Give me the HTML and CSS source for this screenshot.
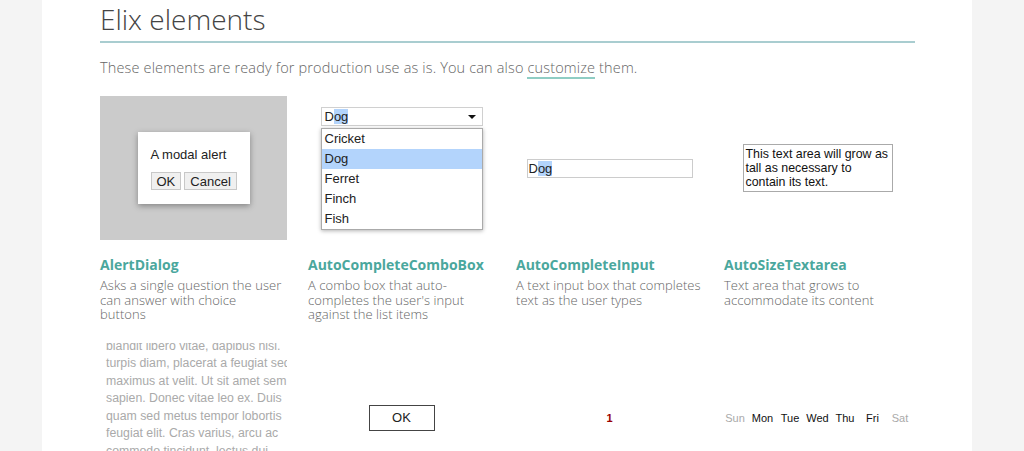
FILE: index.html
```html
<!DOCTYPE html>
<html>
<head>
<meta charset="utf-8">
<link rel="stylesheet" href="styles.css">
</head>
<body>
<div class="page">
  <h1 class="title">Elix elements</h1>
  <p class="intro">These elements are ready for production use as is. You can also <a href="#" class="link">customize</a> them.</p>
  <div class="grid">
    <div class="card">
      <div class="demo demo-alert">
        <div class="dialog">
          <div class="dialog-text">A modal alert</div>
          <div class="dialog-buttons"><span class="btn">OK</span><span class="btn">Cancel</span></div>
        </div>
      </div>
      <div class="card-title">AlertDialog</div>
      <div class="card-desc">Asks a single question the user can answer with choice<br>buttons</div>
    </div>
    <div class="card">
      <div class="demo demo-top">
        <div class="combo">
          <div class="combo-input"><span>D<span class="sel">og</span></span><span class="arrow"></span></div>
          <div class="combo-list">
            <div class="item">Cricket</div>
            <div class="item item-active">Dog</div>
            <div class="item">Ferret</div>
            <div class="item">Finch</div>
            <div class="item">Fish</div>
          </div>
        </div>
      </div>
      <div class="card-title">AutoCompleteComboBox</div>
      <div class="card-desc">A combo box that auto-completes the user's input against the list items</div>
    </div>
    <div class="card">
      <div class="demo">
        <div class="text-input">D<span class="sel">og</span></div>
      </div>
      <div class="card-title">AutoCompleteInput</div>
      <div class="card-desc">A text input box that completes text as the user types</div>
    </div>
    <div class="card">
      <div class="demo">
        <div class="textarea">This text area will grow as tall as necessary to contain its text.</div>
      </div>
      <div class="card-title">AutoSizeTextarea</div>
      <div class="card-desc">Text area that grows to accommodate its content</div>
    </div>

    <div class="card">
      <div class="demo2 demo-lorem">
        <div class="lorem">
          <div>blandit libero vitae, dapibus nisi.</div>
          <div>turpis diam, placerat a feugiat sed</div>
          <div>maximus at velit. Ut sit amet sem</div>
          <div>sapien. Donec vitae leo ex. Duis</div>
          <div>quam sed metus tempor lobortis</div>
          <div>feugiat elit. Cras varius, arcu ac</div>
          <div>commodo tincidunt, lectus dui</div>
        </div>
      </div>
    </div>
    <div class="card">
      <div class="demo2"><span class="ok-btn">OK</span></div>
    </div>
    <div class="card">
      <div class="demo2"><span class="badge">1</span></div>
    </div>
    <div class="card">
      <div class="demo2">
        <div class="days">
          <span class="day weekend">Sun</span>
          <span class="day">Mon</span>
          <span class="day">Tue</span>
          <span class="day">Wed</span>
          <span class="day">Thu</span>
          <span class="day">Fri</span>
          <span class="day weekend">Sat</span>
        </div>
      </div>
    </div>
  </div>
</div>
</body>
</html>
```
FILE: styles.css
```css
html, body {
  margin: 0;
  padding: 0;
}
body {
  background: #f4f4f4;
  height: 451px;
  overflow: hidden;
  font-family: "Open Sans", "Liberation Sans", sans-serif;
}
.page {
  width: 815px;
  margin-left: 42px;
  padding: 0 57px 0 58px;
  background: #fff;
  height: 451px;
  overflow: hidden;
}
.title {
  margin: 0;
  padding: 0 0 3px;
  font-size: 28px;
  font-weight: 300;
  line-height: 38px;
  color: #444;
  border-bottom: 2px solid #a9cdd0;
}
.intro {
  margin: 15px 0 0;
  font-size: 14.5px;
  font-weight: 300;
  line-height: 20px;
  letter-spacing: 0.15px;
  color: #666;
}
.link {
  color: #666;
  text-decoration: none;
  border-bottom: 2px solid #8fcdc4;
}
.grid {
  margin-top: 18px;
  display: grid;
  grid-template-columns: repeat(4, 187px);
  column-gap: 21px;
  row-gap: 21px;
}
.demo {
  height: 144px;
  display: flex;
  align-items: center;
  justify-content: center;
}
.demo-top {
  align-items: flex-start;
  padding-top: 11px;
  height: 133px;
}
.demo-alert {
  background: #cbcbcb;
}
.dialog {
  width: 112px;
  height: 72px;
  box-sizing: border-box;
  background: #fff;
  box-shadow: 0 2px 6px rgba(0,0,0,0.35);
  padding: 15px 0 0 13px;
  font-family: "Liberation Sans", Arial, sans-serif;
  font-size: 13px;
  color: #222;
}
.dialog-buttons {
  margin-top: 10px;
  display: flex;
  gap: 3px;
}
.btn {
  height: 18px;
  line-height: 17px;
  padding: 0 5px;
  box-sizing: border-box;
  background: #f0f0f0;
  border: 1px solid #c8c8c8;
  font-size: 13px;
}
.card-title {
  margin-top: 16px;
  font-size: 14px;
  font-weight: 700;
  color: #4aa79d;
  line-height: 17px;
}
.card-desc {
  margin-top: 5px;
  font-size: 13px;
  font-weight: 300;
  line-height: 14.5px;
  letter-spacing: 0.05px;
  color: #666;
}
.combo {
  width: 162px;
  font-family: "Liberation Sans", Arial, sans-serif;
  font-size: 13px;
  color: #222;
}
.combo-input {
  height: 19px;
  box-sizing: border-box;
  border: 1px solid #d0d0d0;
  display: flex;
  align-items: center;
  justify-content: space-between;
  padding: 0 6px 0 3px;
}
.sel {
  background: #b3d4fc;
}
.arrow {
  width: 0;
  height: 0;
  border-left: 4px solid transparent;
  border-right: 4px solid transparent;
  border-top: 4px solid #111;
}
.combo-list {
  margin-top: 2px;
  border: 1px solid #aaa;
  box-shadow: 0 1px 4px rgba(0,0,0,0.3);
  background: #fff;
}
.item {
  height: 20px;
  line-height: 20px;
  padding-left: 3px;
}
.item-active {
  background: #b3d4fc;
}
.text-input {
  width: 166px;
  height: 19px;
  box-sizing: border-box;
  border: 1px solid #ccc;
  padding-left: 1px;
  font-family: "Liberation Sans", Arial, sans-serif;
  font-size: 13px;
  line-height: 17px;
  color: #222;
}
.textarea {
  width: 150px;
  height: 48px;
  box-sizing: border-box;
  border: 1px solid #aaa;
  padding: 2px 0 2px 2px;
  font-family: "Liberation Sans", Arial, sans-serif;
  font-size: 12.4px;
  line-height: 14px;
  color: #111;
}
.demo2 {
  height: 151px;
  display: flex;
  align-items: center;
  justify-content: center;
  font-family: "Liberation Sans", Arial, sans-serif;
}
.demo-lorem {
  display: block;
  overflow: hidden;
}
.lorem {
  margin-top: -5px;
  padding-left: 6px;
  font-size: 12.3px;
  line-height: 17.5px;
  color: #aaa;
  white-space: nowrap;
}
.ok-btn {
  width: 66px;
  height: 26px;
  box-sizing: border-box;
  border: 1px solid #444;
  text-align: center;
  line-height: 24px;
  font-size: 13px;
  color: #222;
}
.badge {
  font-size: 11px;
  font-weight: 700;
  color: #9a0000;
}
.days {
  display: flex;
  justify-content: center;
}
.day {
  width: 27.5px;
  flex: none;
  text-align: center;
  font-size: 11px;
  color: #111;
}
.weekend {
  color: #aaa;
}
```
